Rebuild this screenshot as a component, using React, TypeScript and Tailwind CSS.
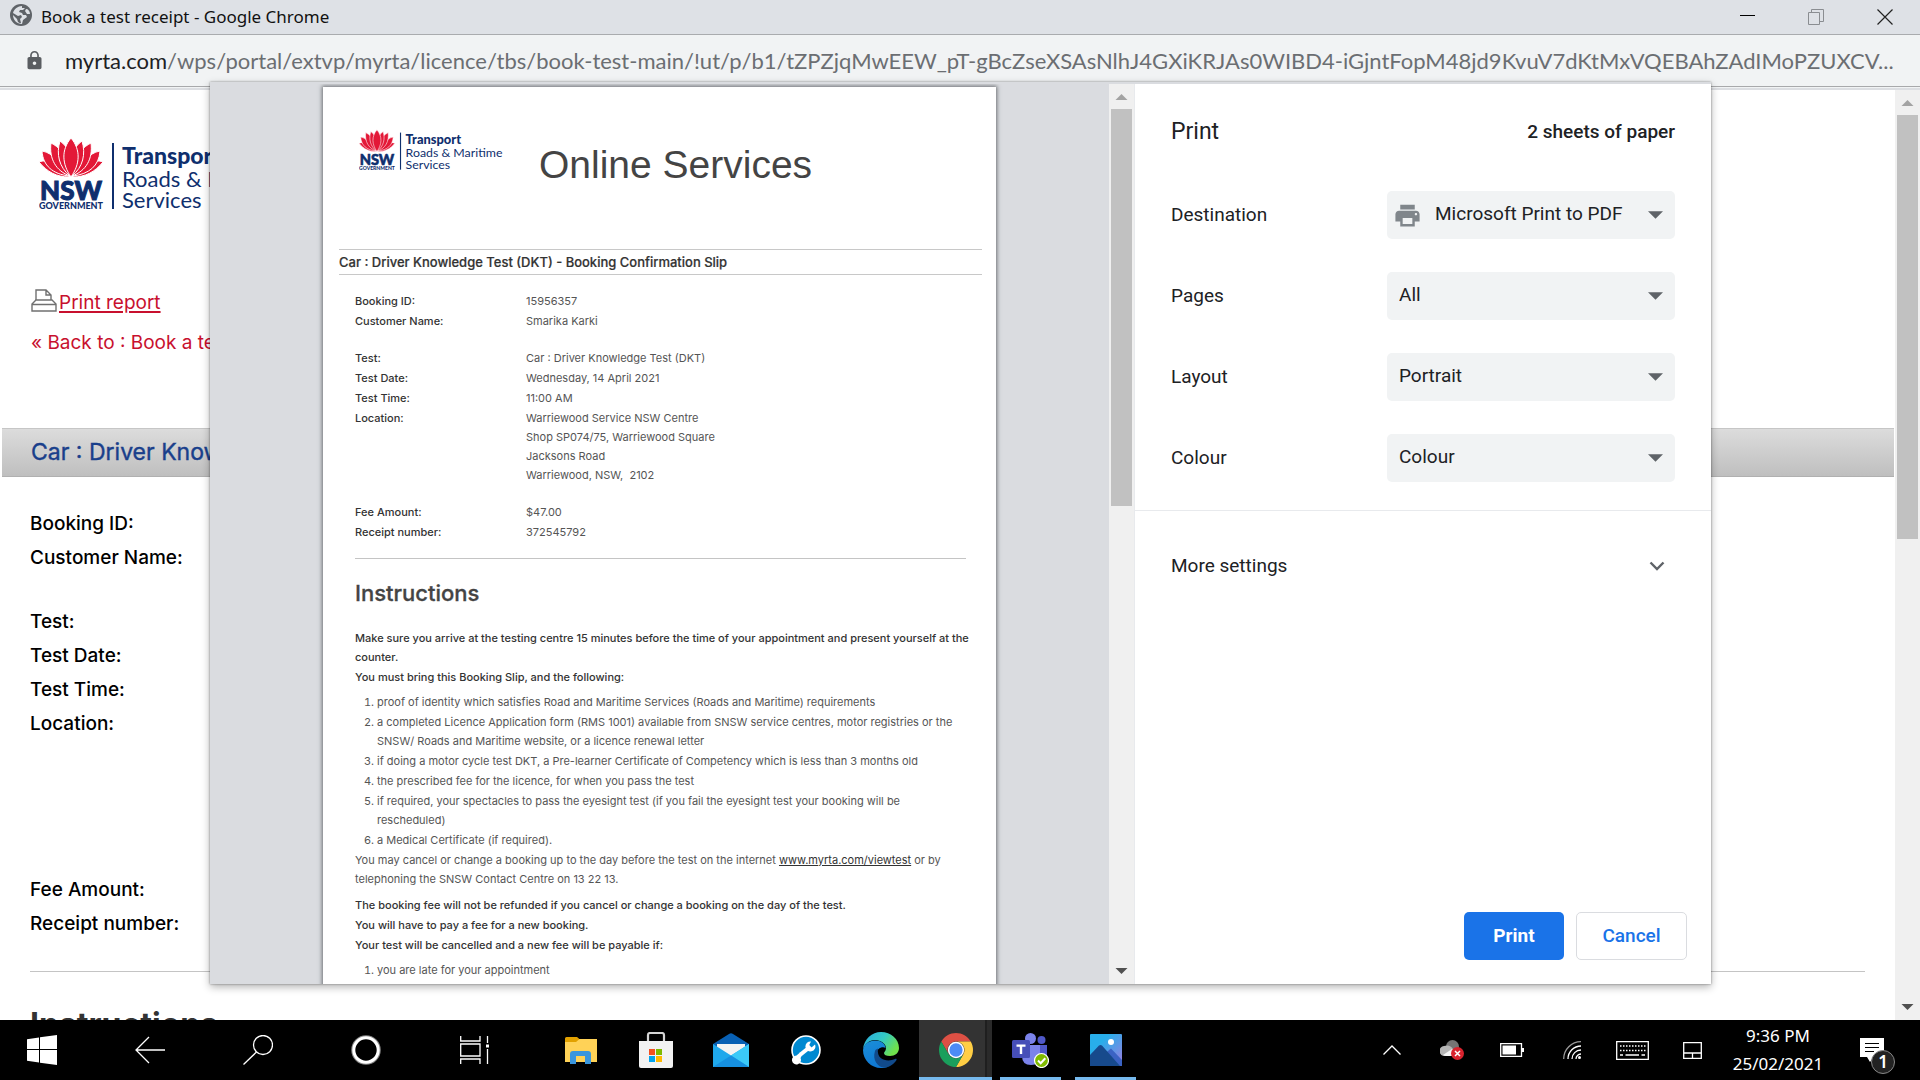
import React from "react";
import { MdLock, MdPrint } from "react-icons/md";

/* ---------- Logo ---------- */

function NswLogo({ className }: { className: string }) {
  return (
    <svg viewBox="0 0 262 74" className={className} role="img" aria-label="Transport Roads and Maritime Services">
      <g fill="#e31837" stroke="#fff" strokeWidth="1">
        <path d="M30 40C18 40 8 35 0 25c5-2 9-1 13 1L30 37z" />
        <path d="M34 40c12 0 22-5 30-15-5-2-9-1-13 1L34 37z" />
        <path d="M30 39C14 37 4 29 3 14c6 1 10 4 13 8z" />
        <path d="M34 39c16-2 26-10 27-25-6 1-10 4-13 8z" />
        <path d="M31 39C17 34 10 22 12 6c8 4 13 10 15 18z" />
        <path d="M33 39c14-5 21-17 19-33-8 4-13 10-15 18z" />
        <path d="M31 39C20 30 17 17 21 4c7 5 10 12 11 20z" />
        <path d="M33 39C44 30 47 17 43 4c-7 5-10 12-11 20z" />
        <path d="M32 40C23 27 22 13 32 1c10 12 9 26 0 39z" />
      </g>
      <g fill="#0f2f6e" fontFamily="Lato, sans-serif">
        <text x="32" y="63" textAnchor="middle" fontSize="26" fontWeight="900" stroke="#0f2f6e" strokeWidth="1">NSW</text>
        <text x="32" y="72" textAnchor="middle" fontSize="9" fontWeight="900">GOVERNMENT</text>
        <rect x="73" y="6" width="2" height="66" />
        <text x="83" y="27" fontSize="23" fontWeight="900">Transport</text>
        <text x="83" y="50" fontSize="22">Roads &amp; Maritime</text>
        <text x="83" y="71" fontSize="22">Services</text>
      </g>
    </svg>
  );
}

/* ---------- Window chrome ---------- */

function TitleBar() {
  return (
    <header className="flex h-[35px] shrink-0 items-center border-b border-[#a9abae] bg-[#dee1e6] pl-[10px]">
      <svg viewBox="0 0 22 22" className="-mt-1 size-[22px]" aria-hidden="true">
        <circle cx="11" cy="11" r="11" fill="#5f6368" />
        <path d="M12 2c-4 0-8 3-9 7l5 3 3-1 1 2-2 2 1 4c-1 0-2 0-3-1l-1-3-4-4c0 5 4 9 9 9l1-4 4-3-1-2h-3l-1-2-3-1 1-2 3 0 2-2-3 0zM16 5l-1 2 2 3h3c0-3-2-5-4-5z" fill="#dee1e6" />
      </svg>
      <h1 className="ml-[9px] flex-1 font-['Noto_Sans'] text-[17px] leading-[34px] text-[#111]">Book a test receipt - Google Chrome</h1>
      <div className="flex">
        <button aria-label="Minimise" className="flex h-[34px] w-[68px] items-center justify-center">
          <svg viewBox="0 0 16 16" className="size-4"><path d="M0 6.500H15" stroke="#000" /></svg>
        </button>
        <button aria-label="Restore" className="flex h-[34px] w-[68px] items-center justify-center">
          <svg viewBox="0 0 16 16" className="size-4" fill="none" stroke="#8a8d91"><path d="M.5 3.500h11v12H.5zM3.500 3V.5h12v12h-3.500" /></svg>
        </button>
        <button aria-label="Close" className="flex h-[34px] w-[70px] items-center justify-center">
          <svg viewBox="0 0 16 16" className="size-4" fill="none" stroke="#222" strokeWidth="1.200"><path d="M.5 .5l15 15M15.500 .5l-15 15" /></svg>
        </button>
      </div>
    </header>
  );
}

function AddressBar() {
  return (
    <div className="shrink-0 border-b-2 border-[#dcdee2] bg-[#f1f3f4] pb-px">
      <div className="flex h-[52px] items-center border-b border-[#a8a9ab] pl-[24px] font-['Lato'] text-[22px] leading-[30px] whitespace-nowrap text-[#6b6e72]">
        <MdLock className="-mt-px mr-5 size-[21px] shrink-0 text-[#5a5d61]" aria-hidden="true" />
        <p>
          <span className="text-[#202124]">myrta.com</span>
          /wps/portal/extvp/myrta/licence/tbs/book-test-main/!ut/p/b1/tZPZjqMwEEW_pT-gBcZseXSAsNlhJ4GXiKRJAs0WIBD4-iGjntFopM48jd9KvuV7dKtMxVQEBAhZAdIMoPZUXCV...
        </p>
      </div>
    </div>
  );
}

function Scrollbar({ thumb }: { thumb: string }) {
  return (
    <div className="flex w-[25px] shrink-0 flex-col items-center bg-[#f0f0f0]" aria-hidden="true">
      <svg viewBox="0 0 25 25" className="h-[25px] w-[25px]"><path d="M6.500 16L12.500 10L18.500 16z" fill="#a3a3a3" /></svg>
      <div className={`w-[21px] bg-[#c1c1c1] ${thumb}`} />
      <svg viewBox="0 0 25 25" className="mt-auto h-[25px] w-[25px]"><path d="M6.500 9L12.500 15L18.500 9z" fill="#505050" /></svg>
    </div>
  );
}

/* ---------- Receipt page behind the dialog ---------- */

const pageGroups: { label: string; tall?: boolean }[][] = [
  [{ label: "Booking ID:" }, { label: "Customer Name:" }],
  [{ label: "Test:" }, { label: "Test Date:" }, { label: "Test Time:" }, { label: "Location:", tall: true }],
  [{ label: "Fee Amount:" }, { label: "Receipt number:" }],
];

function ReceiptPage() {
  return (
    <div className="flex min-h-0 flex-1 bg-white">
      <main className="flex-1 overflow-hidden pt-[47px] pr-px pl-[2px] font-['Inter'] text-[19px]">
        <NswLogo className="ml-[37px] h-[74px] w-[262px]" />
        <nav className="mt-[78px] flex flex-col items-start gap-3 pl-[29px] leading-7 text-[#c8102e]">
          <a href="#print" className="flex">
            <svg viewBox="0 0 26 23" className="h-[23px] w-[26px]" fill="#fff" stroke="#707070" strokeWidth="1.400" aria-hidden="true">
              <path d="M5 12V1h10l5 5v6M15 1v5h5" />
              <path d="M1 22V15l4-4h16l4 4v7zM1 15.500h24" />
            </svg>
            <span className="ml-[2px] underline decoration-2 underline-offset-2">Print report</span>
          </a>
          <a href="#back">« Back to : Book a test</a>
        </nav>
        <h2 className="mt-[71px] border-y border-t-[#c6c6c6] border-b-[#b0b0b0] bg-gradient-to-b from-[#dcdcdc] to-[#bfbfbf] pl-[29px] text-[23px] leading-[47px] text-[#1a3f8b] [-webkit-text-stroke:0.4px_#1a3f8b]">
          Car : Driver Knowledge Test (DKT)
        </h2>
        <dl className="mt-[30px] flex flex-col gap-[30px] pl-[28px] leading-[34px] font-medium text-black">
          {pageGroups.map((group) => (
            <div key={group[0].label}>
              {group.map((row) => (
                <div key={row.label} className={row.tall ? "h-[136px]" : ""}>
                  <dt>{row.label}</dt>
                </div>
              ))}
            </div>
          ))}
        </dl>
        <hr className="mt-[30px] mr-[29px] ml-7 border-[#c4c4c4]" />
        <h2 className="mt-[33px] pl-[28px] text-[32px] leading-10 font-bold text-[#333]">Instructions</h2>
      </main>
      <Scrollbar thumb="h-[424px]" />
    </div>
  );
}

/* ---------- Print preview ---------- */

const slipGroups: [string, string[]][][] = [
  [["Booking ID:", ["15956357"]], ["Customer Name:", ["Smarika Karki"]]],
  [
    ["Test:", ["Car : Driver Knowledge Test (DKT)"]],
    ["Test Date:", ["Wednesday, 14 April 2021"]],
    ["Test Time:", ["11:00 AM"]],
    ["Location:", ["Warriewood Service NSW Centre", "Shop SP074/75, Warriewood Square", "Jacksons Road", "Warriewood, NSW,\u00a0 2102"]],
  ],
  [["Fee Amount:", ["$47.00"]], ["Receipt number:", ["372545792"]]],
];

const requirements: string[][] = [
  ["proof of identity which satisfies Road and Maritime Services (Roads and Maritime) requirements"],
  ["a completed Licence Application form (RMS 1001) available from SNSW service centres, motor registries or the", "SNSW/ Roads and Maritime website, or a licence renewal letter"],
  ["if doing a motor cycle test DKT, a Pre-learner Certificate of Competency which is less than 3 months old"],
  ["the prescribed fee for the licence, for when you pass the test"],
  ["if required, your spectacles to pass the eyesight test (if you fail the eyesight test your booking will be", "rescheduled)"],
  ["a Medical Certificate (if required)."],
];

function SlipPage() {
  return (
    <article className="mx-auto mt-[3px] h-full w-[673px] bg-white font-['Inter'] text-[11px] leading-[19px] whitespace-nowrap text-[#555] shadow-[0_0_4px_1px_rgba(60,64,67,0.7)]">
      <div className="flex items-start pt-[42px] pl-9">
        <NswLogo className="h-[42px] w-[147px]" />
        <h2 className="mt-3 ml-[33px] font-['Liberation_Sans'] text-[39px] leading-[48px] text-[#444]">Online Services</h2>
      </div>
      <h3 className="mt-[60px] mr-[14px] ml-4 border-y border-[#c8c8c8] text-[13px] leading-6 font-medium text-[#333] [-webkit-text-stroke:0.2px_#333]">
        Car : Driver Knowledge Test (DKT) - Booking Confirmation Slip
      </h3>
      <div className="pr-[30px] pl-8">
        <dl className="mt-[17px] flex flex-col gap-[18px]">
          {slipGroups.map((group) => (
            <div key={group[0][0]} className="flex flex-col gap-px">
              {group.map(([label, lines]) => (
                <div key={label} className="flex">
                  <dt className="w-[171px] font-medium text-[#333]">{label}</dt>
                  <dd>{lines.map((line) => <span key={line} className="block">{line}</span>)}</dd>
                </div>
              ))}
            </div>
          ))}
        </dl>
        <hr className="mt-4 border-[#c4c4c4]" />
        <h3 className="mt-[19px] text-[22px] leading-[30px] font-medium text-[#444] [-webkit-text-stroke:0.3px_#444]">Instructions</h3>
        <div className="mt-[21px] flex flex-col gap-px font-medium text-[#333]">
          <p>Make sure you arrive at the testing centre 15 minutes before the time of your appointment and present yourself at the<br />counter.</p>
          <p>You must bring this Booking Slip, and the following:</p>
        </div>
        <ol className="mt-[6px] flex list-decimal flex-col gap-px pl-[22px]">
          {requirements.map((lines) => (
            <li key={lines[0]}>{lines.map((line) => <span key={line} className="block">{line}</span>)}</li>
          ))}
        </ol>
        <p className="mt-px">
          You may cancel or change a booking up to the day before the test on the internet <a href="#viewtest" className="text-[#333] underline">www.myrta.com/viewtest</a> or by<br />
          telephoning the SNSW Contact Centre on 13 22 13.
        </p>
        <div className="mt-[7px] flex flex-col gap-px font-medium text-[#333]">
          <p>The booking fee will not be refunded if you cancel or change a booking on the day of the test.</p>
          <p>You will have to pay a fee for a new booking.</p>
          <p>Your test will be cancelled and a new fee will be payable if:</p>
        </div>
        <ol className="mt-[6px] list-decimal pl-[22px]">
          <li>you are late for your appointment</li>
        </ol>
      </div>
    </article>
  );
}

function Setting({ id, label, value, printer }: { id: string; label: string; value: string; printer?: boolean }) {
  return (
    <div className="flex h-12 items-center justify-between">
      <label htmlFor={id}>{label}</label>
      <div className="relative w-[288px]">
        {printer && <MdPrint className="absolute top-[10px] left-[6px] size-[29px] text-[#80868b]" aria-hidden="true" />}
        <select id={id} className={`h-12 w-full appearance-none rounded-[5px] bg-[#f1f3f4] pb-[2px] ${printer ? "pl-[48px]" : "pl-3"}`}>
          <option>{value}</option>
        </select>
        <svg viewBox="0 0 14 7" className="pointer-events-none absolute top-[20px] right-3 h-[8px] w-[15px]" aria-hidden="true"><path d="M0 0H14L7 7z" fill="#5f6368" /></svg>
      </div>
    </div>
  );
}

function PrintDialog() {
  return (
    <section role="dialog" aria-label="Print" className="absolute inset-x-[210px] top-[82px] bottom-[96px] flex border-t-2 border-[#dadce0] bg-white right-[209px] shadow-[0_3px_8px_rgba(0,0,0,0.3),0_0_2px_rgba(0,0,0,0.4)]">
      <div className="flex-1 overflow-hidden bg-[#dadce0]">
        <SlipPage />
      </div>
      <Scrollbar thumb="h-[397px]" />
      <div className="flex w-[577px] shrink-0 flex-col border-l border-[#e8eaed] font-['Roboto'] text-[19px] leading-6 text-[#202124]">
        <div className="flex h-24 items-center justify-between px-9">
          <h2 className="text-[23px]">Print</h2>
          <span className="font-medium">2 sheets of paper</span>
        </div>
        <div className="flex flex-col gap-[33px] border-b border-[#e8eaed] px-9 pt-[11px] pb-7">
          <Setting id="destination" label="Destination" value="Microsoft Print to PDF" printer />
          <Setting id="pages" label="Pages" value="All" />
          <Setting id="layout" label="Layout" value="Portrait" />
          <Setting id="colour" label="Colour" value="Colour" />
        </div>
        <button className="flex h-[110px] items-center justify-between pr-[46px] pl-9 text-left">
          More settings
          <svg viewBox="0 0 16 10" className="h-[10px] w-4" fill="none" stroke="#5f6368" strokeWidth="2.400" aria-hidden="true"><path d="M1.500 1.500L8 8l6.500-6.500" /></svg>
        </button>
        <div className="mt-auto flex justify-end gap-3 p-6 font-medium">
          <button className="h-12 w-[100px] rounded-[5px] bg-[#1a73e8] font-bold text-white">Print</button>
          <button className="h-12 w-[111px] rounded-[5px] border border-[#dadce0] text-[#1a73e8]">Cancel</button>
        </div>
      </div>
    </section>
  );
}

/* ---------- Taskbar ---------- */

const line = { fill: "none", stroke: "#fff", strokeWidth: 1.3 };

const systemButtons: { name: string; icon: React.ReactNode }[] = [
  { name: "Start", icon: <svg viewBox="0 0 30 30" className="size-[30px]" fill="#fff"><path d="M0 4.200L12 2.400V14H0zM13 2.200L30 0V14H13zM0 15H12V27.600L0 25.800zM13 15H30V30L13 27.800z" /></svg> },
  { name: "Back", icon: <svg viewBox="0 0 30 28" className="h-7 w-[30px]" {...line}><path d="M30 14H1M14 1L1 14l13 13" /></svg> },
  { name: "Search", icon: <svg viewBox="0 0 30 30" className="size-[30px]" {...line}><circle cx="20" cy="10" r="9.500" /><path d="M13.500 17L.5 29.500" /></svg> },
  { name: "Cortana", icon: <svg viewBox="0 0 30 30" className="size-[30px]" fill="none"><circle cx="15" cy="15" r="13.500" stroke="#8a8a8a" strokeWidth="2.500" /><circle cx="15" cy="15" r="12.200" stroke="#fff" strokeWidth="3" /></svg> },
  { name: "Task view", icon: <svg viewBox="0 0 29 28" className="h-7 w-[29px]" {...line}><path d="M.7 0V5H20V0M.7 28V23H20V28M.7 8H20V20H.7zM27.500 0V7M27.500 13V28" /><path d="M26 8.500h3v3h-3z" fill="#fff" stroke="none" /></svg> },
];

const apps: { name: string; state?: "active" | "open"; icon: React.ReactNode }[] = [
  {
    name: "File Explorer",
    icon: (
      <svg viewBox="0 0 32 27" className="h-[27px] w-8">
        <path d="M0 1.500Q0 0 1.500 0H12l3 2.500V8H0z" fill="#e2a100" />
        <path d="M0 5H11l3.500-3H32V25H0z" fill="#ffd257" />
        <path d="M5 27V17q0-3 3-3H23q3 0 3 3V27H20V19H11v8z" fill="#3a96dd" />
      </svg>
    ),
  },
  {
    name: "Microsoft Store",
    icon: (
      <svg viewBox="0 0 36 36" className="size-9">
        <path d="M10 11V3q0-2 2-2H24q2 0 2 2v8" fill="none" stroke="#d5d5d5" strokeWidth="2.200" />
        <path d="M1 9H35V34q0 2-2 2H3q-2 0-2-2z" fill="#f2f2f2" />
        <path d="M11 17h6v6h-6z" fill="#f25022" /><path d="M18 17h6v6h-6z" fill="#7fba00" />
        <path d="M11 24h6v6h-6z" fill="#00a4ef" /><path d="M18 24h6v6h-6z" fill="#ffb900" />
      </svg>
    ),
  },
  {
    name: "Mail",
    icon: (
      <svg viewBox="0 0 36 34" className="h-[34px] w-9">
        <path d="M0 11L16 1q2-1.500 4 0l16 10v8H0z" fill="#0860b4" />
        <path d="M4 11H32V24H4z" fill="#f3f3f3" />
        <path d="M0 11L18 22.500L36 11V34H0z" fill="#1fa8ec" /><path d="M18 22.500L36 11V34z" fill="#3bcaf8" /><path d="M0 34L18 22.500 36 34z" fill="#1690e0" />
      </svg>
    ),
  },
  {
    name: "Support Assistant",
    icon: (
      <svg viewBox="0 0 30 30" className="size-[30px]">
        <circle cx="15" cy="15" r="14" fill="#0089d1" stroke="#fff" strokeWidth="1.600" />
        <path d="M9.500 19.500L19.500 11.500" stroke="#fff" strokeWidth="4" />
        <path d="M24 9.500l-3.500 3-2.500-2 2-4a5 5 0 1 0 4 3zM5.500 20.500l3.500-3 2.500 2-2 3.500a4.500 4.500 0 1 1-4-2.500z" fill="#fff" />
      </svg>
    ),
  },
  {
    name: "Microsoft Edge",
    icon: (
      <svg viewBox="0 0 36 36" className="size-9">
        <defs>
          <linearGradient id="edgeTop" x1="0" y1="0" x2="1" y2="0.500"><stop offset="0" stopColor="#2aa9e0" /><stop offset="0.550" stopColor="#33c9c4" /><stop offset="1" stopColor="#6fe04d" /></linearGradient>
          <linearGradient id="edgeLeft" x1="0" y1="0" x2="0.400" y2="1"><stop offset="0" stopColor="#1b8fd8" /><stop offset="1" stopColor="#0f78d4" /></linearGradient>
        </defs>
        <path d="M0 17C1 7 9 0 18 0c10 0 18 7 18 16 0 5-4 8-9 8-4 0-6-1-6-3 0-1 2-2 2-5 0-4-5-8-11-8S2 12 0 17z" fill="url(#edgeTop)" />
        <path d="M0 18c1-6 6-9.500 12-9.500S22.500 12 22.500 16C20 14 13 16 13 23c0 6 5 12 13 11.500-3 1.500-6 1.500-8 1.500C8 36 0 28 0 18z" fill="url(#edgeLeft)" />
        <path d="M12 19c-3 9 3 17 10 16.500 5-.5 9-3.500 11.500-7.500.5-1-.5-1.500-1.500-1C26 30 13 29 15 16.500c-1.500.5-2.500 1-3 2.500z" fill="#114a8b" />
      </svg>
    ),
  },
  {
    name: "Google Chrome",
    state: "active",
    icon: (
      <svg viewBox="4 4 40 40" className="size-[34px]">
        <path d="M6.680 14A20 20 0 0 1 41.320 14L24 14A10 10 0 0 0 15.340 29Z" fill="#dd5044" />
        <path d="M41.320 14A20 20 0 0 1 24 44L32.660 29A10 10 0 0 0 24 14Z" fill="#ffce44" />
        <path d="M24 44A20 20 0 0 1 6.680 14L15.340 29A10 10 0 0 0 32.660 29Z" fill="#1a9f5c" />
        <circle cx="24" cy="24" r="8.700" fill="#4c8bf5" stroke="#fff" strokeWidth="1.800" />
      </svg>
    ),
  },
  {
    name: "Microsoft Teams",
    state: "open",
    icon: (
      <svg viewBox="0 0 37 35" className="h-[35px] w-[37px]">
        <circle cx="29.500" cy="7" r="4" fill="#5059c9" /><path d="M24 12H35V25q0 5-5 6-4 0-6-3z" fill="#5059c9" />
        <circle cx="18.500" cy="5.500" r="5.500" fill="#7b83eb" /><path d="M10 12H28V23q0 9-9 9t-9-9z" fill="#7b83eb" />
        <rect y="7" width="18" height="18" rx="1.500" fill="#464eb8" />
        <path d="M4.500 11.500h9v2.200H10.200V21H7.800V13.700H4.500z" fill="#fff" />
        <circle cx="29.500" cy="27.500" r="7" fill="#7fba00" stroke="#fff" strokeWidth="1.200" />
        <path d="M26 27.500l2.700 2.700 4.600-5" fill="none" stroke="#fff" strokeWidth="2" />
      </svg>
    ),
  },
  {
    name: "Photos",
    state: "open",
    icon: (
      <svg viewBox="0 0 32 32" className="size-8">
        <defs><linearGradient id="photoSky" x1="0" y1="0" x2="1" y2="1"><stop offset="0.300" stopColor="#28aeea" /><stop offset="1" stopColor="#a07ae0" /></linearGradient></defs>
        <rect width="32" height="32" rx="1" fill="url(#photoSky)" />
        <path d="M12 22L21 14.500L32 26V32H12z" fill="#3b63c4" />
        <path d="M0 21L9 11.500Q10.500 10.500 12 11.500L30 32H0z" fill="#174a8c" />
        <circle cx="21" cy="8" r="3" fill="#fff" />
      </svg>
    ),
  },
];

const tray: { name: string; icon: React.ReactNode }[] = [
  { name: "Show hidden icons", icon: <svg viewBox="0 0 18 10" className="h-[10px] w-[18px]" {...line}><path d="M.5 9.500L9 1l8.500 8.500" /></svg> },
  {
    name: "Cloud sync error",
    icon: (
      <svg viewBox="0 0 24 20" className="h-5 w-6">
        <circle cx="12.500" cy="6.500" r="6.500" fill="#757575" /><path d="M5 16a5 5 0 0 1-1-10q6-2 9 3l5 3v4z" fill="#b5b5b5" /><path d="M3 15L12 9l7 3v4H6q-2 0-3-1z" fill="#f4f4f4" />
        <circle cx="17.500" cy="13.500" r="6.500" fill="#d9232e" /><path d="M15 11l5 5M20 11l-5 5" stroke="#fff" strokeWidth="1.500" />
      </svg>
    ),
  },
  { name: "Battery", icon: <svg viewBox="0 0 24 14" className="h-[14px] w-6" {...line}><path d="M.7 .7H21.500V13.300H.7z" /><path d="M2.500 2.500H16V11.500H2.500zM22 5h2v4h-2z" fill="#fff" stroke="none" /></svg> },
  { name: "Network", icon: <svg viewBox="0 0 18 18" className="size-[18px]" {...line}><path d="M.7 18A17.300 17.300 0 0 1 18 .7" stroke="#9a9a9a" /><path d="M5 18A13 13 0 0 1 18 5M9 18a9 9 0 0 1 9-9M13 18a5 5 0 0 1 5-5" /><circle cx="16.500" cy="16.500" r="1.500" fill="#fff" stroke="none" /></svg> },
  { name: "Touch keyboard", icon: <svg viewBox="0 0 33 19" className="h-[19px] w-[33px]" {...line}><path d="M.7 .7H32.300V18.300H.7z" /><path d="M4 5H30M4 9.500H30" strokeDasharray="1.500 1.500" /><path d="M4 14H7M9.500 14H23M25.500 14H29" /></svg> },
  { name: "Touchpad", icon: <svg viewBox="0 0 19 17" className="h-[17px] w-[19px]" {...line}><path d="M.7 .7H18.300V16.300H.7zM.7 11H18.300M9.500 11V16" /></svg> },
];

function Taskbar() {
  return (
    <footer className="flex h-[60px] shrink-0 bg-black pl-3">
      <div className="flex gap-12">
        {systemButtons.map((b) => (
          <button key={b.name} aria-label={b.name} className="flex w-[60px] items-center justify-center">{b.icon}</button>
        ))}
      </div>
      <div className="ml-[46px] flex gap-[14px]">
        {apps.map((app) => (
          <button
            key={app.name}
            aria-label={app.name}
            className={
              app.state === "active"
                ? "-mx-[6px] flex w-[73px] items-center justify-center border-b-[3px] border-[#76b9ed] bg-[linear-gradient(to_right,#333_66px,#1f1f1f_66px,#1f1f1f_68px,#2a2a2a_68px)] pt-[3px]"
                : app.state === "open"
                  ? "flex w-[61px] items-center justify-center border-b-[3px] border-[#76b9ed] pt-[3px]"
                  : "flex w-[61px] items-center justify-center"
            }
          >
            {app.icon}
          </button>
        ))}
      </div>
      <div className="ml-auto flex">
        {tray.map((t) => (
          <button key={t.name} aria-label={t.name} className="flex w-[60px] items-center justify-center">{t.icon}</button>
        ))}
        <button className="w-[112px] text-center font-['Noto_Sans'] text-[17px] leading-7 text-white">
          <span className="block">9:36 PM</span>
          <span className="block">25/02/2021</span>
        </button>
        <button aria-label="Notifications" className="relative flex w-[86px] items-center pl-[26px]">
          <svg viewBox="0 0 24 24" className="size-6" aria-hidden="true"><path d="M0 0H24V19H14l-4 5-3-5H0z" fill="#fff" /><path d="M5 5.500H19M5 9.500H19M5 13.500H14" stroke="#000" strokeWidth="1.200" /></svg>
          <span className="absolute top-[30px] left-[37px] flex size-6 items-center justify-center rounded-full border border-[#888] bg-[#222] font-['Noto_Sans'] text-[17px] font-semibold text-white">1</span>
        </button>
      </div>
    </footer>
  );
}

export default function App() {
  return (
    <div className="relative flex h-screen flex-col overflow-hidden">
      <TitleBar />
      <AddressBar />
      <ReceiptPage />
      <Taskbar />
      <PrintDialog />
    </div>
  );
}
